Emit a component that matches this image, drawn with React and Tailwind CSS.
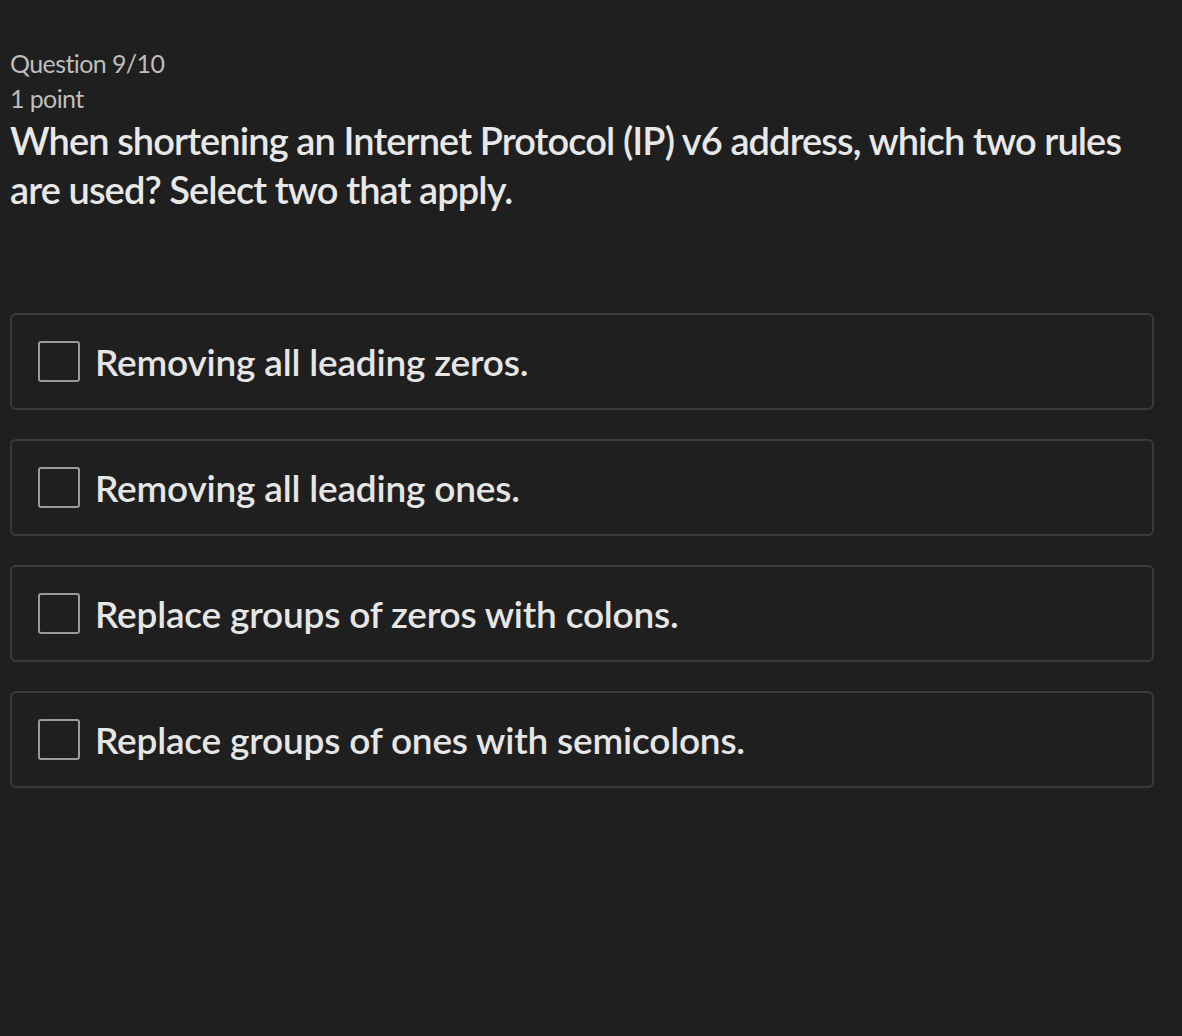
const options = [
  'Removing all leading zeros.',
  'Removing all leading ones.',
  'Replace groups of zeros with colons.',
  'Replace groups of ones with semicolons.',
];

function Option({ label }) {
  return (
    <label className="flex items-center h-[97px] border-2 border-[#3a3a3a] rounded-[6px] pl-[26px] cursor-pointer">
      <span className="w-[42px] h-[41px] border-2 border-[#9a9a9a] rounded-[3px] shrink-0" />
      <span className="ml-[15px] text-[37px] font-semibold text-[#e6e6e6] tracking-[-0.2px]">{label}</span>
    </label>
  );
}

export default function App() {
  return (
    <div className="min-h-[1036px] bg-[#1f1f1f] pt-[46px] pl-[10px] pr-[28px]" style={{ fontFamily: 'Lato, "Noto Sans", sans-serif' }}>
      <div className="text-[25px] leading-[35px] text-[#bdbdbd] tracking-[-0.6px]">Question 9/10</div>
      <div className="text-[25px] leading-[35px] text-[#bdbdbd] tracking-[-0.6px]">1 point</div>
      <h1 className="text-[38px] leading-[49px] font-semibold text-[#e8e8e8] tracking-[-0.9px]">
        When shortening an Internet Protocol (IP) v6 address, which two rules are used? Select two that apply.
      </h1>
      <div className="mt-[99px] flex flex-col gap-[29px]">
        {options.map(o => <Option key={o} label={o} />)}
      </div>
    </div>
  );
}
